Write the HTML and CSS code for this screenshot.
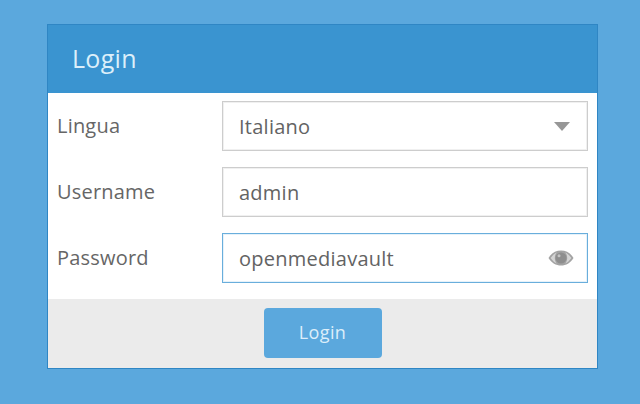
FILE: index.html
```html
<!DOCTYPE html>
<html lang="it">
<head>
<meta charset="utf-8">
<title>Login</title>
<link rel="stylesheet" href="styles.css">
</head>
<body>
<main class="card">
  <header class="card-head">Login</header>
  <form class="card-body">
    <div class="row">
      <label class="label">Lingua</label>
      <div class="field">
        <span class="value">Italiano</span>
        <span class="caret"></span>
      </div>
    </div>
    <div class="row">
      <label class="label">Username</label>
      <div class="field"><span class="value">admin</span></div>
    </div>
    <div class="row">
      <label class="label">Password</label>
      <div class="field focused">
        <span class="value">openmediavault</span>
        <svg class="eye" width="26" height="18" viewBox="0 0 26 18" aria-hidden="true">
          <path fill="#a3a3a3" d="M0.5 9C3.5 4 8 1.5 13 1.5S22.5 4 25.5 9C22.500 14 18 16.500 13 16.500S3.500 14 0.500 9Z"/>
          <path fill="#d4d4d4" d="M2.600 9C4.800 5.800 7 4.200 8.800 3.500C7.500 4.800 6.800 6.800 6.800 9S7.500 13.200 8.800 14.500C7 13.800 4.800 12.200 2.600 9ZM23.400 9C21.200 5.800 19 4.200 17.200 3.500C18.500 4.800 19.200 6.800 19.200 9S18.500 13.200 17.200 14.500C19 13.800 21.200 12.200 23.400 9Z"/>
          <circle cx="13" cy="9" r="5.500" fill="#8e8e8e"/>
          <circle cx="11" cy="6.800" r="1.500" fill="#c4c4c4"/>
        </svg>
      </div>
    </div>
    <div class="card-foot">
      <button class="btn" type="button">Login</button>
    </div>
  </form>
</main>
</body>
</html>
```
FILE: styles.css
```css
* { box-sizing: border-box; }
html, body { height: 100%; }
body {
  margin: 0;
  padding: 24px 42px 0 47px;
  background: #5ba8dd;
  font-family: "Open Sans", "Liberation Sans", sans-serif;
  overflow: hidden;
}
.card {
  width: 551px;
  height: 345px;
  border: 1px solid #2f86c4;
  background: #fff;
  display: flex;
  flex-direction: column;
}
.card-head {
  height: 68px;
  flex: none;
  padding: 0 0 3px 24px;
  display: flex;
  align-items: center;
  background: #3a94d0;
  color: #dceffa;
  font-size: 25px;
  letter-spacing: 0.3px;
}
.card-body {
  flex: 1;
  display: flex;
  flex-direction: column;
  padding-top: 8px;
}
.row {
  display: flex;
  align-items: center;
  height: 50px;
  margin-bottom: 16px;
  padding: 0 9px;
}
.label {
  width: 165px;
  flex: none;
  color: #666;
  font-size: 20px;
  letter-spacing: 0.2px;
  padding-bottom: 1px;
}
.field {
  flex: 1;
  height: 50px;
  border: 1px solid #cdcdcd;
  box-shadow: inset 0 0 0 1px #f0f0f0;
  display: flex;
  align-items: center;
  justify-content: space-between;
  padding: 0 14px 0 16px;
  background: #fff;
}
.focused {
  border-color: #69aedc;
  box-shadow: inset 0 0 0 1px #e6f2fa;
  padding-right: 13px;
}
.value {
  color: #636363;
  font-size: 20px;
  letter-spacing: 0.25px;
  padding-top: 1px;
}
.caret {
  width: 0;
  height: 0;
  margin-right: 3px;
  border-left: 8px solid transparent;
  border-right: 8px solid transparent;
  border-top: 9px solid #979797;
}
.card-foot {
  flex: 1;
  background: #ebebeb;
  display: flex;
  justify-content: center;
  align-items: flex-start;
  padding-top: 9px;
}
.btn {
  width: 118px;
  height: 50px;
  border: none;
  border-radius: 4px;
  padding: 0 0 2px;
  background: #5ba8dd;
  color: #dceefa;
  font-family: inherit;
  font-size: 18px;
  letter-spacing: 0.4px;
}
```
